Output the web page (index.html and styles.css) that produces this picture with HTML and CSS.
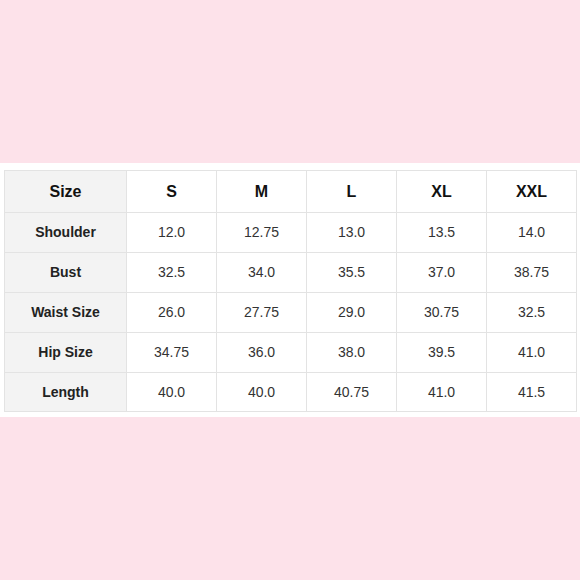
FILE: index.html
```html
<!DOCTYPE html>
<html>
<head>
<meta charset="utf-8">
<link rel="stylesheet" href="styles.css">
</head>
<body>
<div class="page">
  <div class="band">
    <table class="size-table">
      <colgroup>
        <col class="c-label"><col class="c-size"><col class="c-size"><col class="c-size"><col class="c-size"><col class="c-size">
      </colgroup>
      <tr class="head">
        <th class="label">Size</th><th>S</th><th>M</th><th>L</th><th>XL</th><th>XXL</th>
      </tr>
      <tr><th class="label">Shoulder</th><td>12.0</td><td>12.75</td><td>13.0</td><td>13.5</td><td>14.0</td></tr>
      <tr><th class="label">Bust</th><td>32.5</td><td>34.0</td><td>35.5</td><td>37.0</td><td>38.75</td></tr>
      <tr><th class="label">Waist Size</th><td>26.0</td><td>27.75</td><td>29.0</td><td>30.75</td><td>32.5</td></tr>
      <tr><th class="label">Hip Size</th><td>34.75</td><td>36.0</td><td>38.0</td><td>39.5</td><td>41.0</td></tr>
      <tr class="last"><th class="label">Length</th><td>40.0</td><td>40.0</td><td>40.75</td><td>41.0</td><td>41.5</td></tr>
    </table>
  </div>
</div>
</body>
</html>
```

FILE: styles.css
```css
html, body {
  margin: 0;
  padding: 0;
}
body {
  background: #fde2ea;
  font-family: "Liberation Sans", Arial, sans-serif;
  color: #222;
}
.page {
  height: 580px;
  display: flex;
  flex-direction: column;
  justify-content: center;
}
.band {
  background: #ffffff;
  padding: 7px 4px 5px 4px;
  margin-top: -1px;
}
.size-table {
  border-collapse: collapse;
  table-layout: fixed;
  width: 572px;
}
.c-label { width: 122px; }
.c-size { width: 90px; }
.size-table th,
.size-table td {
  border: 1px solid #e3e3e3;
  text-align: center;
  padding: 0;
  height: 39px;
  font-size: 14px;
  color: #333;
}
.size-table th {
  font-weight: bold;
  color: #222;
}
.size-table tr.head th {
  height: 39px;
  padding-top: 2px;
  font-size: 16px;
  color: #111;
}
.size-table tr.last th,
.size-table tr.last td {
  height: 38px;
}
.size-table th.label {
  background: #f3f3f3;
}
```
